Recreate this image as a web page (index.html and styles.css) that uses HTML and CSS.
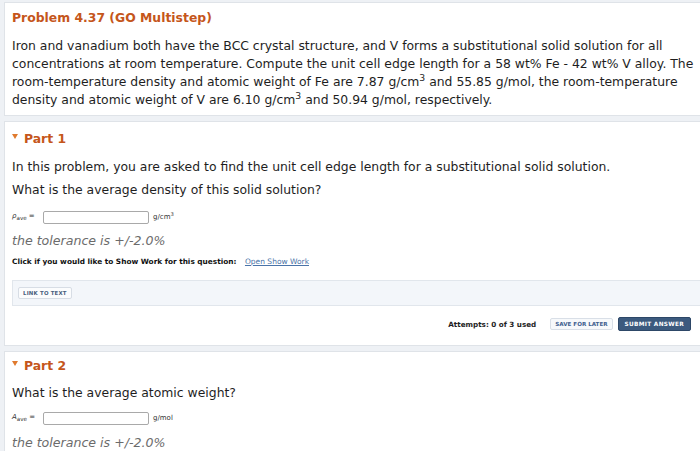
FILE: index.html
```html
<!DOCTYPE html>
<html>
<head>
<meta charset="utf-8">
<link rel="stylesheet" href="styles.css">
</head>
<body>
<div class="page">
  <section class="card intro">
    <h1 class="title">Problem 4.37 (GO Multistep)</h1>
    <p class="question">Iron and vanadium both have the BCC crystal structure, and V forms a substitutional solid solution for all concentrations at room temperature. Compute the unit cell edge length for a 58 wt% Fe - 42 wt% V alloy. The <span class="nw">room-temperature</span> density and atomic weight of Fe are 7.87 g/cm<sup>3</sup> and 55.85 g/mol, the <span class="nw">room-temperature</span> density and atomic weight of V are 6.10 g/cm<sup>3</sup> and 50.94 g/mol, respectively.</p>
  </section>

  <section class="card part">
    <h2 class="part-title"><span class="caret"></span>Part 1</h2>
    <p class="text first">In this problem, you are asked to find the unit cell edge length for a substitutional solid solution.</p>
    <p class="text">What is the average density of this solid solution?</p>
    <div class="answer-row">
      <span class="label"><i>ρ</i><sub>ave</sub> =</span>
      <span class="input"></span>
      <span class="unit">g/cm<sup>3</sup></span>
    </div>
    <p class="tolerance">the tolerance is +/-2.0%</p>
    <p class="showwork">Click if you would like to Show Work for this question: <a class="link">Open Show Work</a></p>
    <div class="linkbox"><span class="btn-small">LINK TO TEXT</span></div>
    <div class="actions">
      <span class="attempts">Attempts: 0 of 3 used</span>
      <span class="btn-save">SAVE FOR LATER</span>
      <span class="btn-submit">SUBMIT ANSWER</span>
    </div>
  </section>

  <section class="card part part2">
    <h2 class="part-title"><span class="caret"></span>Part 2</h2>
    <p class="text first">What is the average atomic weight?</p>
    <div class="answer-row">
      <span class="label"><i>A</i><sub>ave</sub> =</span>
      <span class="input"></span>
      <span class="unit">g/mol</span>
    </div>
    <p class="tolerance">the tolerance is +/-2.0%</p>
  </section>
</div>
</body>
</html>
```
FILE: styles.css
```css
html, body {
  margin: 0;
  padding: 0;
  overflow: hidden;
  background: #eef1f5;
}
body {
  font-family: "DejaVu Sans", Verdana, sans-serif;
  color: #1e1e1e;
}
.page {
  width: 712px;
  padding: 2px 0 0 4px;
  display: flex;
  flex-direction: column;
  gap: 5px;
}
.card {
  background: #fff;
  border: 1px solid #dfe3e8;
  padding: 0 0 0 7px;
}
.nw {
  white-space: nowrap;
}
.title {
  margin: 0;
  padding-top: 6px;
  font-size: 12.4px;
  line-height: 18px;
  color: #c5561b;
  font-weight: bold;
}
.question {
  margin: 10px 0 6px;
  font-size: 12.4px;
  line-height: 18px;
  width: 705px;
}
.question sup, .unit sup {
  font-size: 0.75em;
  line-height: 0;
}
.part-title {
  margin: 0;
  padding-top: 8px;
  font-size: 12.4px;
  line-height: 18px;
  color: #c5561b;
  font-weight: bold;
  display: flex;
  align-items: center;
  gap: 6px;
}
.caret {
  width: 0;
  height: 0;
  border-left: 3.5px solid transparent;
  border-right: 3.5px solid transparent;
  border-top: 5px solid #e07a2e;
  margin-top: -5px;
}
.text {
  margin: 0;
  font-size: 12.4px;
  line-height: 23px;
}
.text.first {
  margin-top: 7px;
}
.answer-row {
  display: flex;
  align-items: center;
  height: 14px;
  margin-top: 9px;
  font-size: 7px;
  color: #333;
}
.label {
  width: 31px;
}
.label i { font-style: italic; }
.label sub { font-size: 0.8em; }
.input {
  width: 104px;
  height: 11px;
  border: 1px solid #a9a9a9;
  border-radius: 2px;
  background: #fff;
}
.unit {
  margin-left: 4px;
}
.tolerance {
  margin: 8px 0 0;
  font-size: 12.6px;
  line-height: 18px;
  font-style: italic;
  color: #6b6b6b;
}
.showwork {
  margin: 7px 0 0;
  font-size: 7.35px;
  line-height: 9px;
  font-weight: bold;
  color: #111;
}
.link {
  font-weight: normal;
  font-size: 7.5px;
  color: #4a73a8;
  text-decoration: underline;
  margin-left: 6px;
}
.linkbox {
  margin-top: 14px;
  width: 700px;
  height: 24px;
  background: #f3f6fa;
  border: 1px solid #e1e6ec;
  display: flex;
  align-items: center;
  padding-left: 5px;
}
.btn-small {
  font-size: 5.4px;
  font-weight: bold;
  color: #4a5f7d;
  background: #fbfcfd;
  border: 1px solid #d7dde5;
  border-radius: 2px;
  padding: 2px 4px;
  letter-spacing: 0.2px;
}
.actions {
  display: flex;
  align-items: center;
  justify-content: flex-end;
  width: 679px;
  height: 32px;
  padding: 2px 0 5px;
  gap: 5px;
}
.attempts {
  font-size: 7.2px;
  font-weight: bold;
  margin-right: 9px;
}
.btn-save {
  font-size: 5.6px;
  font-weight: bold;
  color: #3f5f8f;
  background: #f7f9fb;
  border: 1px solid #d9dfe7;
  border-radius: 2px;
  padding: 2px 4px;
}
.btn-submit {
  font-size: 5.8px;
  font-weight: bold;
  color: #fff;
  background: #3c5a7e;
  border: 1px solid #2d4767;
  border-radius: 2px;
  padding: 3px 6px;
  letter-spacing: 0.3px;
}
.part2 .part-title {
  padding-top: 5px;
}
.part2 .text.first {
  margin-top: 6px;
}
.part2 .answer-row {
  margin-top: 7px;
}
.part2 .tolerance {
  margin-top: 9px;
}
```
